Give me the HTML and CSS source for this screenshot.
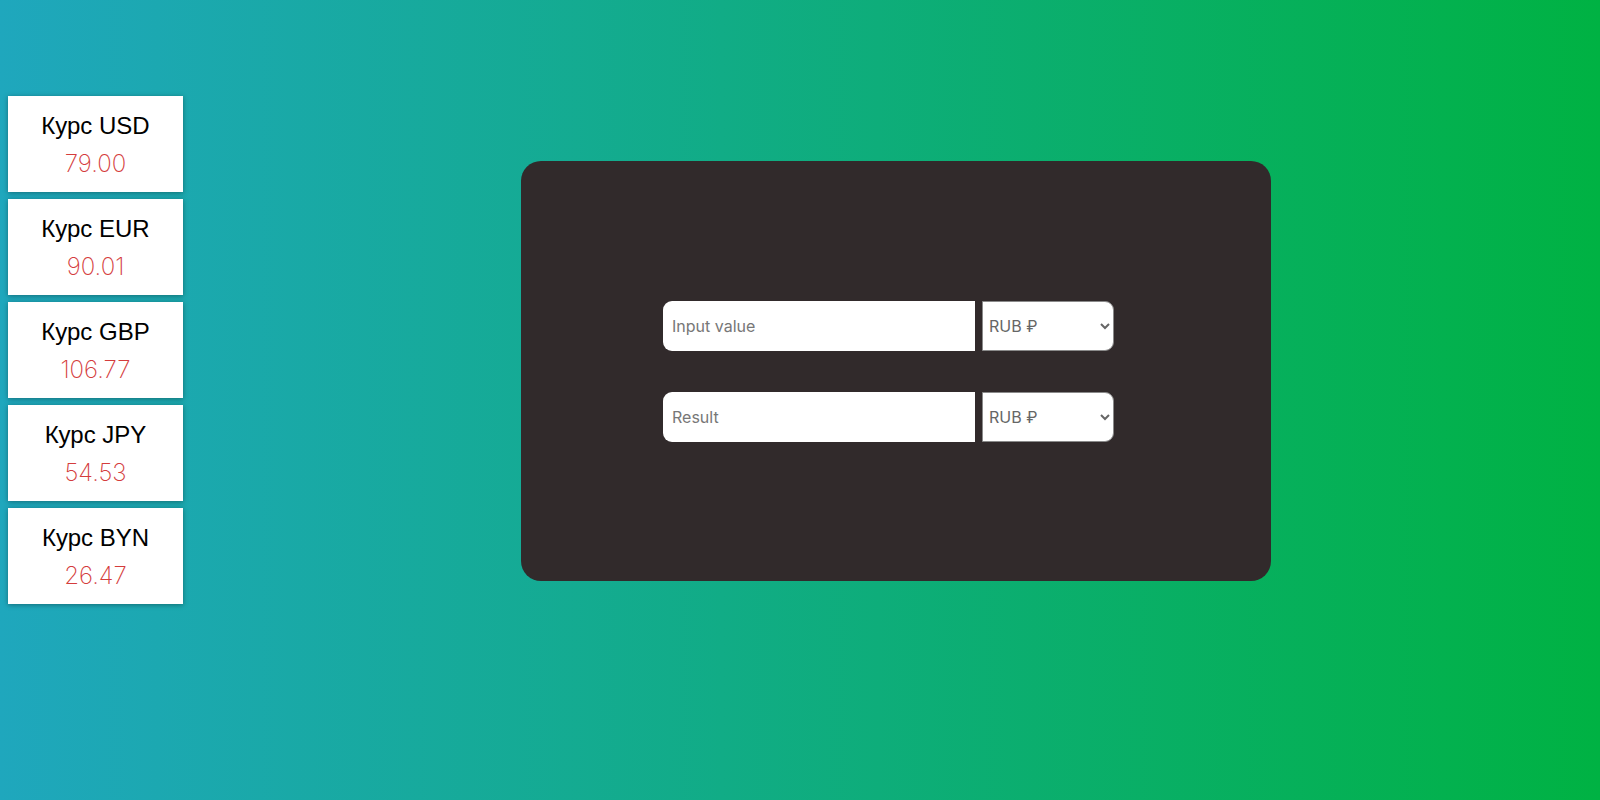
FILE: index.html
```html
<!DOCTYPE html>
<html lang="ru">
<head>
<meta charset="utf-8">
<title>Converter</title>
<link rel="stylesheet" href="styles.css">
</head>
<body>
<div class="page">
  <aside class="rates">
    <div class="rate-card"><div class="rate-title">Курс USD</div><div class="rate-value">79.00</div></div>
    <div class="rate-card"><div class="rate-title">Курс EUR</div><div class="rate-value">90.01</div></div>
    <div class="rate-card"><div class="rate-title">Курс GBP</div><div class="rate-value">106.77</div></div>
    <div class="rate-card"><div class="rate-title">Курс JPY</div><div class="rate-value">54.53</div></div>
    <div class="rate-card"><div class="rate-title">Курс BYN</div><div class="rate-value">26.47</div></div>
  </aside>
  <main class="main">
    <section class="converter">
      <div class="conv-row">
        <input class="conv-input" type="text" placeholder="Input value">
        <select class="conv-select"><option>RUB ₽</option></select>
      </div>
      <div class="conv-row">
        <input class="conv-input" type="text" placeholder="Result">
        <select class="conv-select"><option>RUB ₽</option></select>
      </div>
    </section>
  </main>
</div>
</body>
</html>
```
FILE: styles.css
```css
html, body {
  height: 100%;
}
body {
  margin: 0;
  padding: 8px;
  box-sizing: border-box;
  background: linear-gradient(to right, #1fa7bd, #00b243);
  font-family: "Liberation Sans", Arial, sans-serif;
  overflow: hidden;
}
.page {
  display: flex;
  align-items: flex-start;
}
.rates {
  width: 175px;
  margin-top: 88px;
  display: flex;
  flex-direction: column;
  gap: 7px;
}
.rate-card {
  height: 96px;
  box-sizing: border-box;
  background: #fff;
  box-shadow: 0 1px 5px rgba(0, 0, 0, 0.35);
  text-align: center;
  padding-top: 15px;
}
.rate-title {
  font-size: 24px;
  line-height: 30px;
  color: #000;
}
.rate-value {
  margin-top: 5px;
  font-family: "Inter", sans-serif;
  font-weight: 250;
  font-size: 24px;
  line-height: 36px;
  color: #d43c3c;
}
.main {
  flex: 1;
  padding-top: 153px;
  padding-left: 338px;
}
.converter {
  width: 750px;
  height: 420px;
  box-sizing: border-box;
  background: #312a2b;
  border-radius: 20px;
  display: flex;
  flex-direction: column;
  justify-content: center;
  gap: 41px;
  padding-left: 142px;
}
.conv-row {
  display: flex;
  gap: 7px;
}
.conv-input {
  width: 312px;
  height: 50px;
  box-sizing: border-box;
  border: none;
  border-radius: 9px 0 0 9px;
  padding: 0 9px;
  font-family: "Inter", sans-serif;
  font-size: 16px;
  color: #333;
  background: #fff;
  outline: none;
}
.conv-input::placeholder {
  color: #777;
}
.conv-select {
  width: 132px;
  height: 50px;
  box-sizing: border-box;
  border: 1px solid #8a8a8a;
  border-radius: 0 9px 9px 0;
  padding: 0 2px;
  font-family: "Inter", sans-serif;
  font-size: 16px;
  color: #666;
  background: #fff;
}
```
